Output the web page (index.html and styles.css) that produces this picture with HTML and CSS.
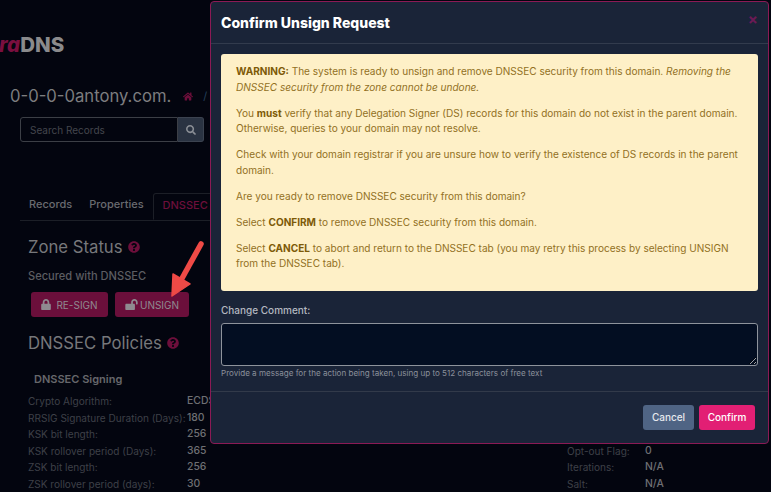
FILE: index.html
```html
<!DOCTYPE html>
<html lang="en">
<head>
  <meta charset="UTF-8">
  <title>Confirm Unsign Request</title>
  <link rel="stylesheet" href="styles.css">
</head>
<body>
  <!-- Page behind the modal -->
  <div class="page">
    <div class="logo"><em>ra</em>DNS</div>
    <div class="zone-head">
      <span class="zone-name">0-0-0-0antony.com.</span>
      <svg class="home-icon" viewBox="0 0 576 512"><path d="M280.37 148.26L96 300.11V464a16 16 0 0 0 16 16l112.06-.29a16 16 0 0 0 15.92-16V368a16 16 0 0 1 16-16h64a16 16 0 0 1 16 16v95.64a16 16 0 0 0 16 16.05L464 480a16 16 0 0 0 16-16V300L295.67 148.26a12.19 12.19 0 0 0-15.3 0zM571.6 251.47L488 182.56V44.05a12 12 0 0 0-12-12h-56a12 12 0 0 0-12 12v72.61L318.47 43a48 48 0 0 0-61 0L4.34 251.47a12 12 0 0 0-1.6 16.9l25.5 31A12 12 0 0 0 45.15 301l235.22-193.74a12.19 12.19 0 0 1 15.3 0L530.9 301a12 12 0 0 0 16.9-1.6l25.5-31a12 12 0 0 0-1.7-16.93z"/></svg>
      <span class="crumb-sep">/</span>
    </div>
    <div class="search">
      <div class="search-input">Search Records</div>
      <div class="search-btn">
        <svg viewBox="0 0 512 512"><path d="M505 442.7L405.3 343c-4.5-4.5-10.6-7-17-7H372c27.6-35.3 44-79.7 44-128C416 93.1 322.9 0 208 0S0 93.1 0 208s93.1 208 208 208c48.3 0 92.7-16.4 128-44v16.3c0 6.4 2.5 12.5 7 17l99.7 99.7c9.4 9.4 24.6 9.4 33.9 0l28.3-28.3c9.4-9.4 9.4-24.6.1-34zM208 336c-70.7 0-128-57.2-128-128 0-70.7 57.2-128 128-128 70.7 0 128 57.2 128 128 0 70.7-57.2 128-128 128z"/></svg>
      </div>
    </div>
    <div class="tabs">
      <span class="tab">Records</span>
      <span class="tab">Properties</span>
      <span class="tab active">DNSSEC</span>
    </div>
    <div class="section">
      <h2>Zone Status
        <svg class="help" viewBox="0 0 512 512"><path d="M504 256c0 136.997-111.043 248-248 248S8 392.997 8 256C8 119.083 119.043 8 256 8s248 111.083 248 248zM262.655 90c-54.497 0-89.255 22.957-116.549 63.758-3.536 5.286-2.353 12.415 2.715 16.258l34.699 26.31c5.205 3.947 12.621 3.008 16.665-2.122 17.864-22.658 30.113-35.797 57.303-35.797 20.429 0 45.698 13.148 45.698 32.958 0 14.976-12.363 22.667-32.534 33.976C247.128 238.528 216 254.941 216 296v4c0 6.627 5.373 12 12 12h56c6.627 0 12-5.373 12-12v-1.333c0-28.462 83.186-29.647 83.186-106.667 0-58.002-60.165-102-116.531-102zM256 338c-25.365 0-46 20.635-46 46 0 25.364 20.635 46 46 46s46-20.636 46-46c0-25.365-20.635-46-46-46z"/></svg>
      </h2>
      <div class="secured">Secured with DNSSEC</div>
      <div class="actions">
        <span class="action resign">
          <svg class="lock" viewBox="0 0 448 512"><path d="M400 224h-24v-72C376 68.2 307.8 0 224 0S72 68.2 72 152v72H48c-26.5 0-48 21.5-48 48v192c0 26.5 21.5 48 48 48h352c26.5 0 48-21.5 48-48V272c0-26.5-21.5-48-48-48zm-104 0H152v-72c0-39.7 32.3-72 72-72s72 32.3 72 72v72z"/></svg>
          RE-SIGN
        </span>
        <span class="action unsign">
          <svg class="lock-open" viewBox="0 0 576 512"><path d="M423.5 0C339.5.3 272 69.5 272 153.5V224H48c-26.5 0-48 21.5-48 48v192c0 26.5 21.5 48 48 48h352c26.5 0 48-21.5 48-48V272c0-26.5-21.5-48-48-48h-48v-71.1c0-39.6 31.7-72.5 71.3-72.9 40-.4 72.7 32.1 72.7 72v80c0 13.3 10.7 24 24 24h32c13.3 0 24-10.7 24-24v-80C576 68 507.5-.3 423.5 0z"/></svg>
          UNSIGN
        </span>
      </div>
      <h2 class="policies-title">DNSSEC Policies
        <svg class="help" viewBox="0 0 512 512"><path d="M504 256c0 136.997-111.043 248-248 248S8 392.997 8 256C8 119.083 119.043 8 256 8s248 111.083 248 248zM262.655 90c-54.497 0-89.255 22.957-116.549 63.758-3.536 5.286-2.353 12.415 2.715 16.258l34.699 26.31c5.205 3.947 12.621 3.008 16.665-2.122 17.864-22.658 30.113-35.797 57.303-35.797 20.429 0 45.698 13.148 45.698 32.958 0 14.976-12.363 22.667-32.534 33.976C247.128 238.528 216 254.941 216 296v4c0 6.627 5.373 12 12 12h56c6.627 0 12-5.373 12-12v-1.333c0-28.462 83.186-29.647 83.186-106.667 0-58.002-60.165-102-116.531-102zM256 338c-25.365 0-46 20.635-46 46 0 25.364 20.635 46 46 46s46-20.636 46-46c0-25.365-20.635-46-46-46z"/></svg>
      </h2>
      <div class="policies">
        <div class="signing">
          <h3>DNSSEC Signing</h3>
          <div class="policy-table">
            <span>Crypto Algorithm:</span><b>ECDSA</b>
            <span>RRSIG Signature Duration (Days):</span><b>180</b>
            <span>KSK bit length:</span><b>256</b>
            <span>KSK rollover period (Days):</span><b>365</b>
            <span>ZSK bit length:</span><b>256</b>
            <span>ZSK rollover period (days):</span><b>30</b>
          </div>
        </div>
        <div class="policy-table nsec">
          <span>Opt-out Flag:</span><b>0</b>
          <span>Iterations:</span><b>N/A</b>
          <span>Salt:</span><b>N/A</b>
        </div>
      </div>
    </div>
  </div>

  <!-- Annotation arrow -->
  <svg class="arrow" viewBox="0 0 60 70">
    <path d="M49 6 L28 44" fill="none" stroke="#ef4a46" stroke-width="5.5" stroke-linecap="round"/>
    <path d="M20 58 L21 36 L38 46 Z" fill="#ef4a46" stroke="#ef4a46" stroke-width="1.5" stroke-linejoin="round"/>
  </svg>

  <!-- Confirm modal -->
  <div class="modal">
    <div class="modal-header">
      <h1>Confirm Unsign Request</h1>
      <span class="close">&times;</span>
    </div>
    <div class="modal-body">
      <div class="alert">
        <p><strong>WARNING:</strong> The system is ready to unsign and remove DNSSEC security from this domain. <em>Removing the DNSSEC security from the zone cannot be undone.</em></p>
        <p>You <strong>must</strong> verify that any Delegation Signer (DS) records for this domain do not exist in the parent domain. Otherwise, queries to your domain may not resolve.</p>
        <p>Check with your domain registrar if you are unsure how to verify the existence of DS records in the parent domain.</p>
        <p>Are you ready to remove DNSSEC security from this domain?</p>
        <p>Select <strong>CONFIRM</strong> to remove DNSSEC security from this domain.</p>
        <p>Select <strong>CANCEL</strong> to abort and return to the DNSSEC tab (you may retry this process by selecting UNSIGN from the DNSSEC tab).</p>
      </div>
      <label class="comment-label" for="comment">Change Comment:</label>
      <textarea id="comment" class="comment"></textarea>
      <div class="hint">Provide a message for the action being taken, using up to 512 characters of free text</div>
    </div>
    <div class="modal-footer">
      <button class="btn cancel">Cancel</button>
      <button class="btn confirm">Confirm</button>
    </div>
  </div>
</body>
</html>
```

FILE: styles.css
```css
html, body {
  height: 100%;
  margin: 0;
  overflow: hidden;
  background: #03050f;
  font-family: Inter, "Liberation Sans", sans-serif;
}

/* Dimmed page behind the modal */
.page {
  height: 492px;
  box-sizing: border-box;
  padding-top: 33px;
  overflow: hidden;
}
.logo {
  font-size: 20.5px;
  line-height: 24px;
  font-weight: 800;
  color: #8a8a8c;
  margin-left: -1px;
}
.logo em {
  color: #7a0f3f;
}
.zone-head {
  display: flex;
  align-items: center;
  height: 24px;
  margin-top: 27px;
  padding-left: 10px;
}
.zone-name {
  font-size: 16.65px;
  color: #7d7d7f;
}
.home-icon {
  width: 10px;
  height: 9px;
  margin-left: 12px;
  fill: #6d0f3b;
}
.crumb-sep {
  margin-left: 10px;
  font-size: 11px;
  color: #24405c;
}
.search {
  display: flex;
  width: 184px;
  height: 25px;
  margin: 9px 0 0 20px;
}
.search-input {
  flex: 1;
  border: 1px solid #3c3f46;
  border-radius: 3px 0 0 3px;
  padding-left: 9px;
  font-size: 10px;
  line-height: 25px;
  color: #44464d;
}
.search-btn {
  display: flex;
  align-items: center;
  justify-content: center;
  width: 26px;
  background: #2a3342;
  border: 1px solid #3c4350;
  border-left: none;
  border-radius: 0 3px 3px 0;
  box-sizing: border-box;
}
.search-btn svg {
  width: 10px;
  height: 10px;
  fill: #8b8f96;
}
.tabs {
  display: flex;
  height: 27px;
  margin: 51px 0 0 20px;
  width: 190px;
  border-bottom: 1px solid #1c1f27;
}
.tab {
  padding: 0 9px;
  font-size: 11px;
  font-weight: 500;
  line-height: 22px;
  color: #6a6b70;
}
.tab + .tab {
  padding-left: 8px;
}
.tab.active {
  height: 27px;
  padding-left: 9px;
  border: 1px solid #1c1f27;
  border-bottom-color: #03050f;
  border-radius: 3px 3px 0 0;
  color: #6d0f3b;
  box-sizing: border-box;
}
.section {
  padding-left: 28px;
}
h2 {
  display: flex;
  align-items: center;
  gap: 5px;
  margin: 15px 0 0;
  font-size: 16.7px;
  font-weight: 400;
  line-height: 22px;
  color: #77787b;
}
.help {
  width: 12px;
  height: 12px;
  fill: #6d0f3b;
}
.secured {
  margin-top: 11px;
  font-size: 11.1px;
  font-weight: 500;
  line-height: 14px;
  color: #5c5d62;
}
.actions {
  display: flex;
  gap: 7px;
  margin: 9px 0 0 3px;
}
.action {
  display: flex;
  align-items: center;
  justify-content: center;
  height: 25px;
  border-radius: 3px;
  background: #6b0f3b;
  font-size: 10px;
  color: #8f8a90;
}
.resign {
  width: 77px;
  gap: 5px;
}
.unsign {
  width: 74px;
  gap: 2px;
}
.lock {
  width: 10px;
  height: 11px;
  fill: #8f8a90;
}
.lock-open {
  width: 13px;
  height: 11px;
  fill: #8f8a90;
}
.policies-title {
  margin-top: 15px;
}
.policies {
  display: flex;
  margin-top: 18px;
}
.signing {
  width: 539px;
}
h3 {
  margin: 0 0 0 6px;
  font-size: 11px;
  font-weight: 600;
  line-height: 14px;
  color: #66676b;
}
.policy-table {
  display: grid;
  grid-template-columns: 159px auto;
  grid-auto-rows: 16.5px;
  margin-top: 7px;
  font-size: 10.05px;
  line-height: 16.5px;
  color: #3e4048;
  white-space: nowrap;
}
.policy-table b {
  font-size: 10.4px;
  font-weight: 500;
  color: #6e6f73;
}
.nsec {
  align-self: flex-end;
  grid-template-columns: 78px auto;
}

/* Annotation arrow */
.arrow {
  position: absolute;
  left: 152px;
  top: 238px;
  width: 60px;
  height: 70px;
}

/* Modal */
.modal {
  position: absolute;
  left: 210px;
  top: 1px;
  width: 559px;
  height: 443px;
  box-sizing: border-box;
  display: flex;
  flex-direction: column;
  background: #1a2438;
  border: 1px solid #8b1a55;
  border-radius: 4px;
}
.modal-header {
  display: flex;
  align-items: center;
  justify-content: space-between;
  height: 42px;
  flex-shrink: 0;
  padding: 0 10px 1px;
  box-sizing: border-box;
  border-bottom: 1px solid #323b4d;
}
.modal-header h1 {
  margin: 0;
  font-size: 14px;
  font-weight: 800;
  color: #fff;
}
.close {
  margin-bottom: 5px;
  font-size: 15px;
  font-weight: 700;
  color: #6b1a55;
}
.modal-body {
  flex: 1;
  padding: 10px 10px 0;
}
.alert {
  height: 237px;
  box-sizing: border-box;
  padding: 10px 15px;
  background: #fef0c7;
  border-radius: 3px;
  font-size: 10.05px;
  line-height: 15.5px;
  color: #92701f;
}
.alert p {
  margin: 0 0 10.5px;
}
.alert strong {
  color: #7d5a08;
}
.comment-label {
  display: block;
  margin-top: 12px;
  font-size: 10px;
  font-weight: 500;
  line-height: 15px;
  color: #b4b8c0;
}
.comment {
  display: block;
  width: 100%;
  height: 43px;
  margin-top: 5px;
  box-sizing: border-box;
  background: #030e22;
  border: 1px solid #8e939c;
  border-radius: 3px;
}
.hint {
  margin-top: 1px;
  font-size: 8.07px;
  line-height: 12px;
  color: #8b909b;
}
.modal-footer {
  display: flex;
  justify-content: flex-end;
  gap: 5px;
  height: 52px;
  flex-shrink: 0;
  box-sizing: border-box;
  padding: 13px 13px 0 0;
  border-top: 1px solid #323a4a;
}
.btn {
  height: 25px;
  padding: 0 0 1px;
  border: none;
  border-radius: 3px;
  font-family: inherit;
  font-size: 10px;
  font-weight: 500;
  color: #fff;
}
.cancel {
  width: 51px;
  background: #4f6484;
  color: #e6e9ee;
}
.confirm {
  width: 56px;
  background: #e21f74;
}
```
